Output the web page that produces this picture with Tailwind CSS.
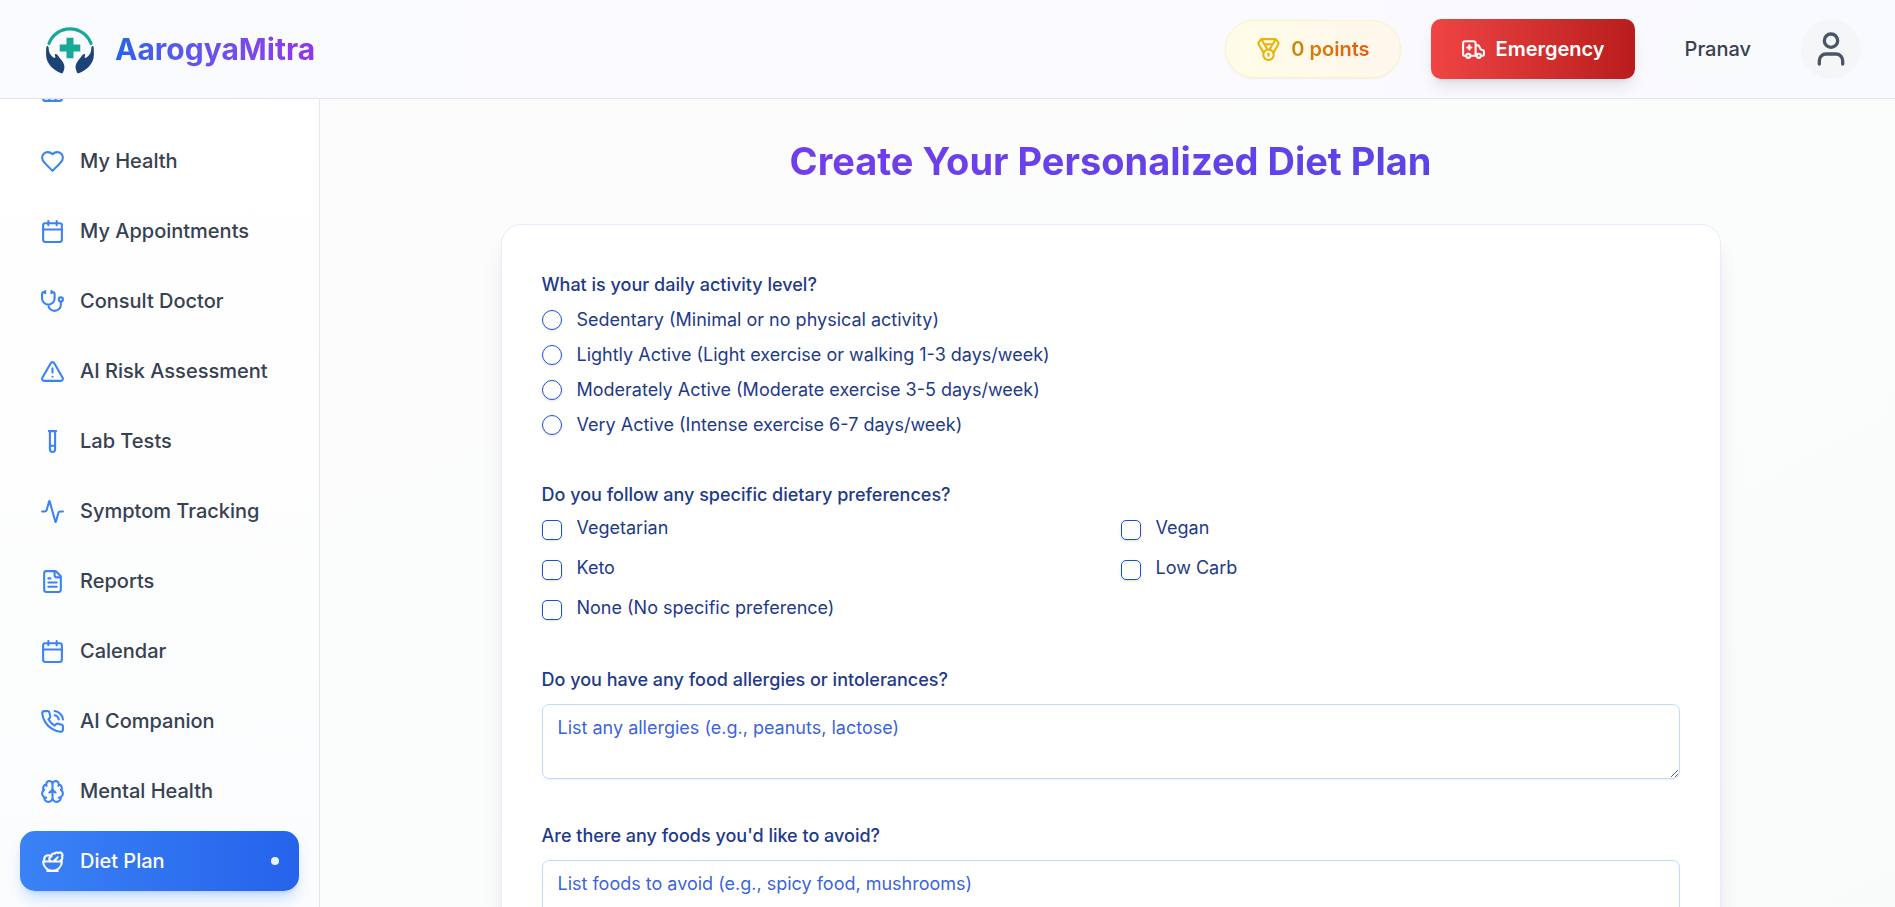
<!DOCTYPE html>
<html lang="en">
<head>
<meta charset="utf-8">
<meta name="viewport" content="width=device-width, initial-scale=1">
<title>AarogyaMitra – Diet Plan</title>
<script src="https://cdn.jsdelivr.net/npm/@tailwindcss/browser@4"></script>
</head>
<body class="flex h-screen flex-col overflow-hidden bg-[#fbfbfc] font-['Inter',sans-serif] text-[20px] leading-[30px] text-[#374151]">

<!-- Icon symbols -->
<svg class="hidden" aria-hidden="true">
  <symbol id="i-home" viewBox="0 0 24 24"><path d="M15 21v-8a1 1 0 0 0-1-1h-4a1 1 0 0 0-1 1v8M3 10a2 2 0 0 1 .709-1.528l7-5.999a2 2 0 0 1 2.582 0l7 5.999A2 2 0 0 1 21 10v9a2 2 0 0 1-2 2H5a2 2 0 0 1-2-2z"/></symbol>
  <symbol id="i-heart" viewBox="0 0 24 24"><path d="M19 14c1.49-1.46 3-3.21 3-5.5A5.5 5.5 0 0 0 16.5 3c-1.76 0-3 .5-4.5 2-1.5-1.5-2.74-2-4.5-2A5.5 5.5 0 0 0 2 8.5c0 2.3 1.5 4.05 3 5.5l7 7Z"/></symbol>
  <symbol id="i-calendar" viewBox="0 0 24 24"><path d="M8 2v4M16 2v4M3 10h18"/><rect x="3" y="4" width="18" height="18" rx="2"/></symbol>
  <symbol id="i-steth" viewBox="0 0 24 24"><path d="M11 2v2M5 2v2M5 3H4a2 2 0 0 0-2 2v4a6 6 0 0 0 12 0V5a2 2 0 0 0-2-2h-1M8 15a6 6 0 0 0 12 0v-3"/><circle cx="20" cy="10" r="2"/></symbol>
  <symbol id="i-alert" viewBox="0 0 24 24"><path d="m21.73 18-8-14a2 2 0 0 0-3.48 0l-8 14A2 2 0 0 0 4 21h16a2 2 0 0 0 1.73-3M12 9v4M12 17h.01"/></symbol>
  <symbol id="i-tube" viewBox="0 0 24 24"><path d="M14.5 2v17.5c0 1.4-1.1 2.5-2.5 2.5c-1.4 0-2.5-1.1-2.5-2.5V2M8.5 2h7M14.5 16h-5"/></symbol>
  <symbol id="i-activity" viewBox="0 0 24 24"><path d="M22 12h-2.48a2 2 0 0 0-1.93 1.46l-2.35 8.36a.25.25 0 0 1-.48 0L9.24 2.18a.25.25 0 0 0-.48 0l-2.35 8.36A2 2 0 0 1 4.49 12H2"/></symbol>
  <symbol id="i-file" viewBox="0 0 24 24"><path d="M15 2H6a2 2 0 0 0-2 2v16a2 2 0 0 0 2 2h12a2 2 0 0 0 2-2V7ZM14 2v4a2 2 0 0 0 2 2h4M10 9H8M16 13H8M16 17H8"/></symbol>
  <symbol id="i-phone" viewBox="0 0 24 24"><path d="M22 16.92v3a2 2 0 0 1-2.18 2 19.79 19.79 0 0 1-8.63-3.07 19.5 19.5 0 0 1-6-6 19.79 19.79 0 0 1-3.07-8.67A2 2 0 0 1 4.11 2h3a2 2 0 0 1 2 1.72 12.84 12.84 0 0 0 .7 2.81 2 2 0 0 1-.45 2.11L8.09 9.91a16 16 0 0 0 6 6l1.27-1.27a2 2 0 0 1 2.11-.45 12.84 12.84 0 0 0 2.81.7A2 2 0 0 1 22 16.92zM14.05 2a9 9 0 0 1 8 7.94M14.05 6A5 5 0 0 1 18 10"/></symbol>
  <symbol id="i-brain" viewBox="0 0 24 24"><path d="M12 5a3 3 0 1 0-5.997.125 4 4 0 0 0-2.526 5.77 4 4 0 0 0 .556 6.588A4 4 0 1 0 12 18ZM12 5a3 3 0 1 1 5.997.125 4 4 0 0 1 2.526 5.77 4 4 0 0 1-.556 6.588A4 4 0 1 1 12 18ZM15 13a4.5 4.5 0 0 1-3-4 4.5 4.5 0 0 1-3 4M17.599 6.5a3 3 0 0 0 .399-1.375M6.003 5.125A3 3 0 0 0 6.401 6.5M3.477 10.896a4 4 0 0 1 .585-.396M19.938 10.5a4 4 0 0 1 .585.396M6 18a4 4 0 0 1-1.967-.516M19.967 17.484A4 4 0 0 1 18 18"/></symbol>
  <symbol id="i-salad" viewBox="0 0 24 24"><path d="M7 21h10M12 21a9 9 0 0 0 9-9H3a9 9 0 0 0 9 9ZM11.38 12a2.4 2.4 0 0 1-.4-4.77 2.4 2.4 0 0 1 3.2-2.77 2.4 2.4 0 0 1 3.47-.63 2.4 2.4 0 0 1 3.37 3.37 2.4 2.4 0 0 1-1.1 3.7 2.51 2.51 0 0 1 .03 1.1M13 12l4-4M10.9 7.25A3.99 3.99 0 0 0 4 10c0 .73.2 1.41.54 2"/></symbol>
</svg>

<header class="flex h-[99px] shrink-0 items-center justify-between border-b border-[#e2e4ee] bg-linear-to-r from-[#f9fbff] via-[#fbfaff] to-[#f9fafd] pr-[34px] pl-10">
  <a href="#" class="flex items-center gap-[15px]">
    <svg class="size-[60px]" viewBox="0 0 60 60" aria-hidden="true">
      <path d="M9 24.500A22.400 22.400 0 0 1 51 24.500" fill="none" stroke="#17a998" stroke-width="3.200" stroke-linecap="round"/>
      <path d="M26.500 18.700h7v6.800h6.800v7h-6.800v6.800h-7v-6.800h-6.800v-7h6.800z" fill="#17a998"/>
      <path id="hand" d="M6.600 27.200c1-.7 2 .1 2 1.600.1 4.500 1.500 7.500 4.800 9.600 1.200.7 2.300.3 1.900-.9-.5-1.200-.8-2.300.2-2.500 1.500-.3 3.500 3 5.500 5.500C23.500 43.500 25 46.500 24.300 49.500c-.3 1.600-.9 3-1.300 4-.4.9-1.200 1.100-2.200.6C14.500 51.500 6.300 45.500 6.100 36c0-3 0-7.500.5-8.800z" fill="#1d4275"/>
      <use href="#hand" transform="matrix(-1 0 0 1 60 0)"/>
    </svg>
    <span class="bg-linear-to-r from-[#2563eb] to-[#9333ea] bg-clip-text text-[30px] leading-[38px] font-bold text-transparent">AarogyaMitra</span>
  </a>
  <div class="flex items-center gap-[30px]">
    <div class="flex h-[58px] items-center gap-[10px] rounded-full border border-[#fef3c0] bg-linear-to-r from-[#fefce8] to-[#fff7ed] px-[30px] shadow-xs">
      <svg class="size-[25px] text-[#eab308]" viewBox="0 0 24 24" fill="none" stroke="currentColor" stroke-width="2" stroke-linecap="round" stroke-linejoin="round" aria-hidden="true"><path d="M7.210 15 2.660 7.140a2 2 0 0 1 .13-2.200L4.400 2.800A2 2 0 0 1 6 2h12a2 2 0 0 1 1.600.8l1.600 2.140a2 2 0 0 1 .14 2.200L16.790 15M11 12 5.120 2.200M13 12l5.880-9.800M8 7h8M12 18v-2h-.5"/><circle cx="12" cy="17" r="5"/></svg>
      <span class="bg-linear-to-r from-[#ca8a04] to-[#ea580c] bg-clip-text font-semibold text-transparent">0 points</span>
    </div>
    <button type="button" class="flex h-[60px] items-center gap-[10px] rounded-[10px] bg-linear-to-r from-[#ef4444] to-[#b91c1c] px-[30px] font-semibold text-white shadow-lg">
      <svg class="size-[25px]" viewBox="0 0 24 24" fill="none" stroke="currentColor" stroke-width="2" stroke-linecap="round" stroke-linejoin="round" aria-hidden="true"><path d="M10 10H6M14 18V6a2 2 0 0 0-2-2H4a2 2 0 0 0-2 2v11a1 1 0 0 0 1 1h2M19 18h2a1 1 0 0 0 1-1v-3.280a1 1 0 0 0-.684-.948l-1.923-.641a1 1 0 0 1-.578-.502l-1.539-3.076A1 1 0 0 0 16.382 8H14M8 8v4M9 18h6"/><circle cx="17" cy="18" r="2"/><circle cx="7" cy="18" r="2"/></svg>
      Emergency
    </button>
    <span class="rounded-full bg-[#f9fafc] px-5 py-[10px] font-medium">Pranav</span>
    <button type="button" aria-label="Account" class="flex size-[60px] items-center justify-center rounded-full bg-[#f5f6f8] text-[#4b5563]">
      <svg class="size-10" viewBox="0 0 24 24" fill="none" stroke="currentColor" stroke-width="2" stroke-linecap="round" stroke-linejoin="round" aria-hidden="true"><path d="M19 21v-2a4 4 0 0 0-4-4H9a4 4 0 0 0-4 4v2"/><circle cx="12" cy="7" r="4"/></svg>
    </button>
  </div>
</header>

<div class="flex min-h-0 flex-1">
  <aside class="flex w-80 shrink-0 flex-col justify-end overflow-hidden border-r border-gray-200 bg-linear-to-b from-white to-[#fbfcfd] px-5 pb-4">
    <nav class="flex flex-col gap-[10px] font-medium [&_a]:flex [&_a]:h-[60px] [&_a]:shrink-0 [&_a]:items-center [&_a]:gap-[15px] [&_a]:rounded-[15px] [&_a]:px-5 [&_svg]:size-[25px] [&_svg]:fill-none [&_svg]:stroke-current [&_svg]:stroke-2 [&_svg]:[stroke-linecap:round] [&_svg]:[stroke-linejoin:round]">
      <a href="#" aria-label="Dashboard"><svg class="text-[#3b82f6]" aria-hidden="true"><use href="#i-home"/></svg></a>
      <a href="#"><svg class="text-[#3b82f6]" aria-hidden="true"><use href="#i-heart"/></svg>My Health</a>
      <a href="#"><svg class="text-[#3b82f6]" aria-hidden="true"><use href="#i-calendar"/></svg>My Appointments</a>
      <a href="#"><svg class="text-[#3b82f6]" aria-hidden="true"><use href="#i-steth"/></svg>Consult Doctor</a>
      <a href="#"><svg class="text-[#3b82f6]" aria-hidden="true"><use href="#i-alert"/></svg>AI Risk Assessment</a>
      <a href="#"><svg class="text-[#3b82f6]" aria-hidden="true"><use href="#i-tube"/></svg>Lab Tests</a>
      <a href="#"><svg class="text-[#3b82f6]" aria-hidden="true"><use href="#i-activity"/></svg>Symptom Tracking</a>
      <a href="#"><svg class="text-[#3b82f6]" aria-hidden="true"><use href="#i-file"/></svg>Reports</a>
      <a href="#"><svg class="text-[#3b82f6]" aria-hidden="true"><use href="#i-calendar"/></svg>Calendar</a>
      <a href="#"><svg class="text-[#3b82f6]" aria-hidden="true"><use href="#i-phone"/></svg>AI Companion</a>
      <a href="#"><svg class="text-[#3b82f6]" aria-hidden="true"><use href="#i-brain"/></svg>Mental Health</a>
      <a href="#" aria-current="page" class="bg-linear-to-r from-[#3b82f6] to-[#2563eb] text-white shadow-lg shadow-blue-500/25"><svg aria-hidden="true"><use href="#i-salad"/></svg>Diet Plan<span class="ml-auto size-2 rounded-full bg-white/90"></span></a>
    </nav>
  </aside>

  <main class="min-w-0 flex-1 overflow-hidden bg-linear-to-br from-[#fcfcfc] via-[#fbfcfc] to-[#f9fafa] pt-10 pr-5 pl-[26px]">
    <div class="mx-auto max-w-[1220px]">
      <h1 class="bg-linear-to-r from-[#7c3aed] to-[#4f46e5] bg-clip-text text-center text-[38px] leading-[45px] font-bold text-transparent">Create Your Personalized Diet Plan</h1>
      <form class="mt-10 flex flex-col gap-11 rounded-[20px] border border-[#ede9fe] bg-white px-10 pt-[47px] pb-12 text-[18px] leading-[25px] text-[#1e3a8a] shadow-xl">
        <fieldset class="flex flex-col gap-[10px] pb-px [&_input]:size-5 [&_input]:appearance-none [&_input]:rounded-full [&_input]:border [&_input]:border-[#1d4ed8] [&_input]:shadow-sm [&_label]:flex [&_label]:items-center [&_label]:gap-[15px]">
          <legend class="mb-[10px] font-medium">What is your daily activity level?</legend>
          <label><input type="radio" name="activity">Sedentary (Minimal or no physical activity)</label>
          <label><input type="radio" name="activity">Lightly Active (Light exercise or walking 1-3 days/week)</label>
          <label><input type="radio" name="activity">Moderately Active (Moderate exercise 3-5 days/week)</label>
          <label><input type="radio" name="activity">Very Active (Intense exercise 6-7 days/week)</label>
        </fieldset>
        <fieldset class="grid grid-cols-2 gap-x-5 gap-y-[15px] pb-[3px] [&_input]:size-5 [&_input]:appearance-none [&_input]:rounded-[5px] [&_input]:border [&_input]:border-[#1d4ed8] [&_input]:shadow-sm [&_label]:flex [&_label]:items-end [&_label]:gap-[15px]">
          <legend class="mb-2 font-medium">Do you follow any specific dietary preferences?</legend>
          <label><input type="checkbox">Vegetarian</label>
          <label><input type="checkbox">Vegan</label>
          <label><input type="checkbox">Keto</label>
          <label><input type="checkbox">Low Carb</label>
          <label><input type="checkbox">None (No specific preference)</label>
        </fieldset>
        <div class="flex flex-col gap-3">
          <label for="allergies" class="font-medium">Do you have any food allergies or intolerances?</label>
          <textarea id="allergies" placeholder="List any allergies (e.g., peanuts, lactose)" class="h-[75px] w-full rounded-[7px] border border-[#bfdbfe] px-[15px] py-[10px] shadow-xs placeholder:text-[#1d4ed8]/90"></textarea>
        </div>
        <div class="flex flex-col gap-3">
          <label for="avoid" class="font-medium">Are there any foods you'd like to avoid?</label>
          <textarea id="avoid" placeholder="List foods to avoid (e.g., spicy food, mushrooms)" class="h-[75px] w-full rounded-[7px] border border-[#bfdbfe] px-[15px] py-[10px] shadow-xs placeholder:text-[#1d4ed8]/90"></textarea>
        </div>
      </form>
    </div>
  </main>
</div>
</body>
</html>
